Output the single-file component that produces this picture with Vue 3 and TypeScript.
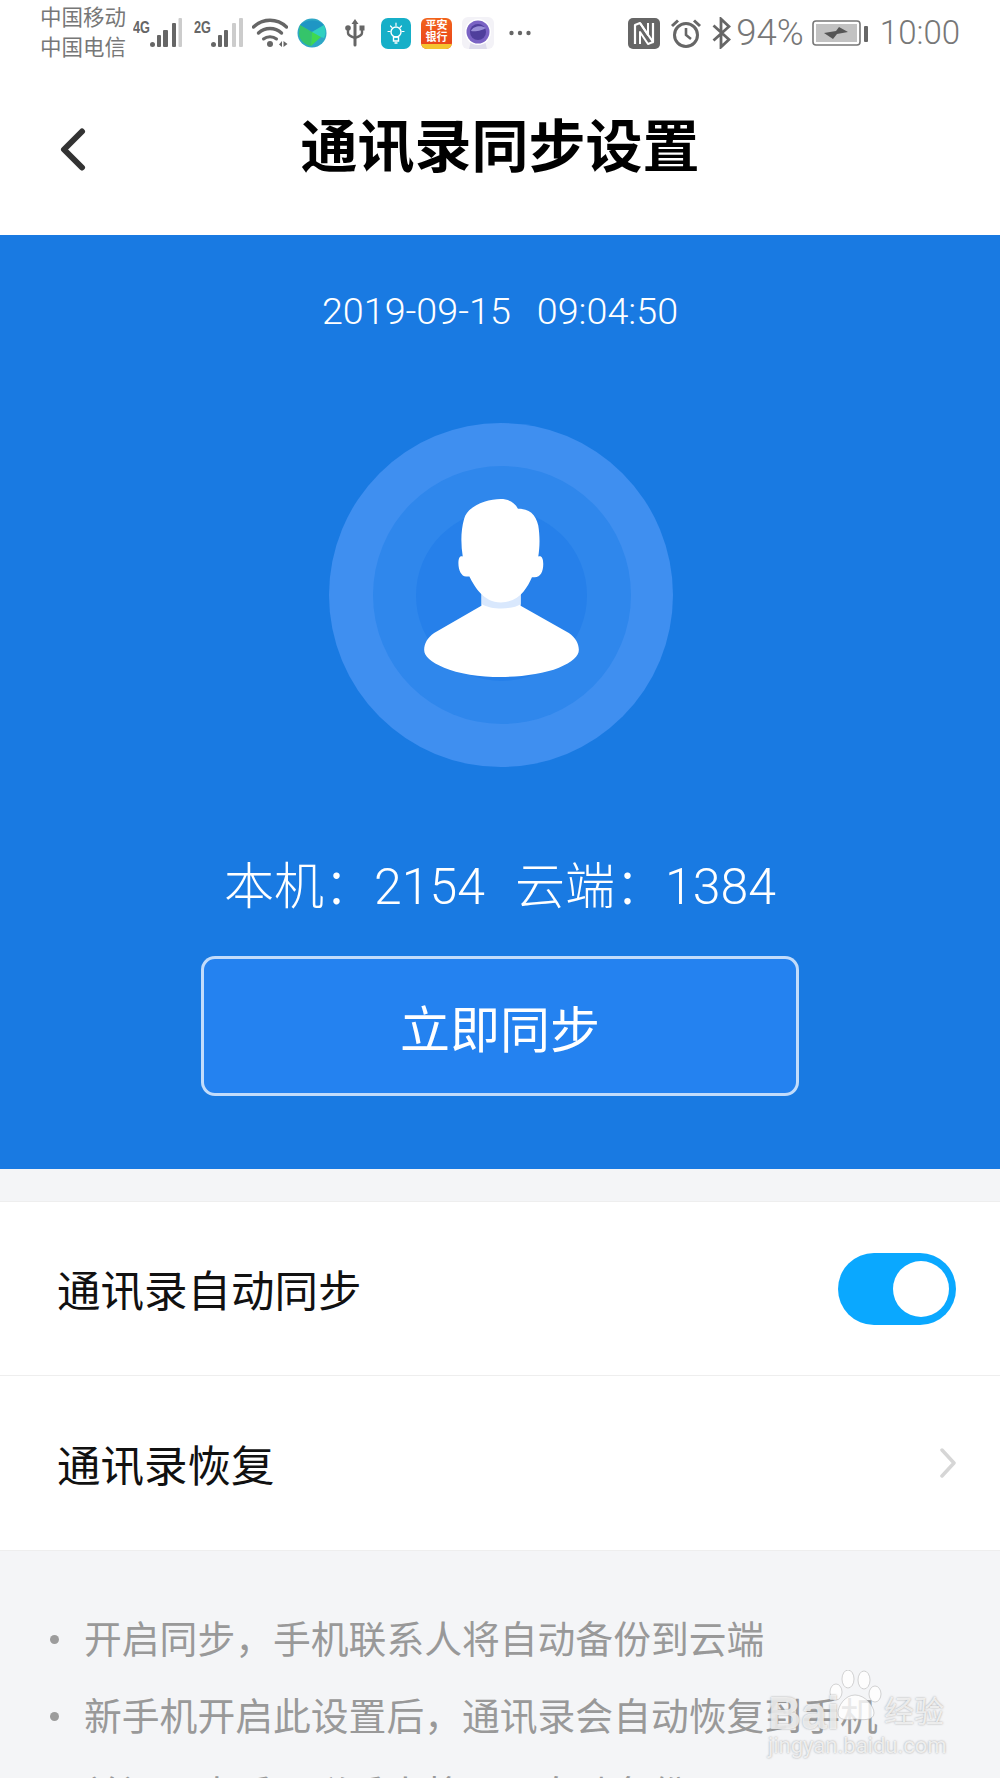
<script setup lang="ts">
const notes: string[] = [
  '开启同步，手机联系人将自动备份到云端',
  '新手机开启此设置后，通讯录会自动恢复到手机',
  '关闭同步后，联系人将不再自动备份',
]
</script>

<template>
  <div class="page">
    <div class="status">
      <div class="carrier"><span>中国移动</span><span>中国电信</span></div>
      <svg class="sig" width="49" height="30" viewBox="0 0 49 30">
        <text x="0" y="15" textLength="17" lengthAdjust="spacingAndGlyphs" class="net">4G</text>
        <rect x="17" y="24" width="5" height="5" rx="2.5" fill="#666"/>
        <rect x="24" y="17" width="4" height="12" rx="1" fill="#666"/>
        <rect x="30" y="12" width="5" height="17" rx="1" fill="#666"/>
        <rect x="39" y="5" width="4" height="24" rx="1" fill="#666"/>
        <rect x="45.500" y="0" width="3.500" height="29" rx="1" fill="#ccc"/>
      </svg>
      <svg class="sig sig2" width="49" height="30" viewBox="0 0 49 30">
        <text x="0" y="15" textLength="17" lengthAdjust="spacingAndGlyphs" class="net">2G</text>
        <rect x="17" y="24" width="5" height="5" rx="2.500" fill="#666"/>
        <rect x="24" y="17" width="4" height="12" rx="1" fill="#666"/>
        <rect x="30" y="12" width="4" height="17" rx="1" fill="#666"/>
        <rect x="38" y="5" width="4" height="24" rx="1" fill="#ccc"/>
        <rect x="45" y="0" width="4" height="29" rx="1" fill="#ccc"/>
      </svg>
      <svg class="wifi" width="36" height="30" viewBox="0 0 36 30">
        <path d="M1.500 9 C11 0 25 0 34.500 9" fill="none" stroke="#666" stroke-width="3.400" stroke-linecap="round"/>
        <path d="M6.500 15 C13 9 23 9 29.500 15" fill="none" stroke="#666" stroke-width="3.400" stroke-linecap="round"/>
        <path d="M11.500 21 C15 18 21 18 24.500 21" fill="none" stroke="#666" stroke-width="3" stroke-linecap="round"/>
        <circle cx="18" cy="26" r="3" fill="#666"/>
        <path d="M27 26.500 L30 23 V29 Z M31.500 23 V29 L35.500 26 Z" fill="#666"/>
      </svg>
      <svg class="gem" width="30" height="30" viewBox="0 0 30 30">
        <circle cx="15" cy="15" r="14.500" fill="#2ea7c6"/>
        <path d="M3 7 C8 2 20 0 27 7 L15 14 Z" fill="#1f96c4"/>
        <path d="M3 7 L15 14 L14 28 C8 27 3 23 2 16 Z" fill="#35c46a"/>
        <path d="M15 14 L27 7 C29 12 29 16 27 20 L17 17 Z" fill="#2fd0c0"/>
        <path d="M15 14 L24 19 L14 28 Z" fill="#3fd94f"/>
      </svg>
      <svg class="usb" width="20" height="30" viewBox="0 0 20 30">
        <path d="M10 1 L13.500 6 H11.500 V27 A1.500 1.500 0 0 1 8.500 27 V6 H6.500 Z" fill="#666"/>
        <path d="M3 11 V15 C3 17 5 18 10 20 C15 18 17 17 17 15 V11" fill="none" stroke="#666" stroke-width="2.400"/>
        <circle cx="3" cy="10" r="2.800" fill="#666"/>
        <rect x="14.500" y="7.500" width="5" height="5" fill="#666"/>
      </svg>
      <svg class="bulb" width="30" height="31" viewBox="0 0 30 31">
        <rect width="30" height="31" rx="7" fill="#16afc8"/>
        <circle cx="15" cy="14" r="5" fill="none" stroke="#fff" stroke-width="1.400"/>
        <path d="M12.500 19 H17.500 V23 H12.500 Z M13.500 25 H16.500" fill="none" stroke="#fff" stroke-width="1.400"/>
        <path d="M15 5 V7.500 M7 13.500 H9 M21 13.500 H23 M9.500 8 L11 9.500 M20.500 8 L19 9.500" stroke="#fff" stroke-width="1.200" stroke-linecap="round"/>
      </svg>
      <div class="pingan"><span>平安</span><span>银行</span><i></i></div>
      <svg class="cam" width="32" height="32" viewBox="0 0 32 32">
        <rect width="32" height="32" rx="6" fill="#f3f2f7"/>
        <path d="M7 32 L9 24 H23 L25 32 Z" fill="#dedcec"/>
        <circle cx="16" cy="15" r="13" fill="#ffffff"/>
        <circle cx="16" cy="15" r="11.500" fill="#7a63c4"/>
        <circle cx="16" cy="15" r="8" fill="#4f3f9c"/>
        <path d="M9 14 C11 9 19 8 24 11 C21 13 14 15 9 14 Z" fill="#9a90d8"/>
      </svg>
      <svg class="dots" width="22" height="6" viewBox="0 0 22 6">
        <circle cx="2.500" cy="3" r="2.200" fill="#666"/><circle cx="11" cy="3" r="2.200" fill="#666"/><circle cx="19.500" cy="3" r="2.200" fill="#666"/>
      </svg>

      <svg class="nfc" width="32" height="31" viewBox="0 0 32 31">
        <rect width="32" height="31" rx="5" fill="#666"/>
        <path d="M7 26 V7 L12 5 L25 24 V5" fill="none" stroke="#fff" stroke-width="2.200" stroke-linejoin="round"/>
        <path d="M12 26 V14 L20 26 L25 24 M20 5 V17 L12 5" fill="none" stroke="#fff" stroke-width="2" stroke-linejoin="round"/>
      </svg>
      <svg class="alarm" width="32" height="30" viewBox="0 0 32 30">
        <circle cx="16" cy="17" r="11.500" fill="none" stroke="#666" stroke-width="3"/>
        <path d="M16 10 V17 L21 21" fill="none" stroke="#666" stroke-width="2.600"/>
        <path d="M2 8 L8 2.500 M30 8 L24 2.500" stroke="#666" stroke-width="3"/>
      </svg>
      <svg class="bt" width="19" height="32" viewBox="0 0 19 32">
        <path d="M1.500 8.500 L17 22.500 L9 30 V2 L17 9.500 L1.500 23.500" fill="none" stroke="#666" stroke-width="2.800"/>
      </svg>
      <span class="pct">94%</span>
      <svg class="batt" width="56" height="26" viewBox="0 0 56 26">
        <rect x="1" y="1" width="47" height="24" rx="3" fill="none" stroke="#777" stroke-width="1.600"/>
        <rect x="4" y="4" width="41" height="18" fill="#c2c2c2"/>
        <path d="M12 13 L24 11 L27 7 L36 12 L25 14 L21 19 Z" fill="#555"/>
        <rect x="52" y="6" width="4" height="16" rx="1" fill="#666"/>
      </svg>
      <span class="clock">10:00</span>
    </div>

    <header class="head">
      <svg class="back" width="26" height="43" viewBox="0 0 26 43">
        <path d="M22 3.500 L4 21.500 L22 39.500" fill="none" stroke="#333" stroke-width="6" stroke-linecap="round" stroke-linejoin="round"/>
      </svg>
      <h1>通讯录同步设置</h1>
    </header>

    <section class="hero">
      <div class="date"><span>2019-09-15</span><span>09:04:50</span></div>
      <div class="ring outer">
        <div class="ring middle">
          <div class="ring inner">
            <svg class="person" width="155" height="178" viewBox="340 265 465 535">
              <path d="M512 540 H630 V586 L775 668 C795 682 805 700 805 718 C805 738 785 755 745 772 C700 790 630 800 570 800 C510 800 440 790 400 772 C360 755 340 738 340 718 C340 700 350 682 370 668 L512 586 Z" fill="#fff"/>
              <path d="M514 550 C530 575 610 575 630 550 V581 C605 598 540 598 514 581 Z" fill="#d9e8fd"/>
              <path d="M570 265 C592 265 612 274 622 294 C655 294 676 310 683 345 C688 375 688 410 683 438 C692 434 698 442 698 460 C698 482 690 500 672 500 L664 500 C650 532 625 576 570 576 C520 576 492 530 476 498 L466 498 C452 498 443 478 443 458 C443 442 448 434 456 438 C450 400 450 360 460 325 C470 285 530 265 570 265 Z" fill="#fff"/>
            </svg>
          </div>
        </div>
      </div>
      <div class="stats"><span>本机：2154</span><span>云端：1384</span></div>
      <button class="sync" type="button">立即同步</button>
    </section>

    <div class="list">
      <div class="row">
        <span>通讯录自动同步</span>
        <div class="toggle"><i></i></div>
      </div>
      <div class="row">
        <span>通讯录恢复</span>
        <svg class="chev" width="16" height="30" viewBox="0 0 16 30">
          <path d="M2 2 L14 15 L2 28" fill="none" stroke="#d6d6d6" stroke-width="3.500" stroke-linecap="round" stroke-linejoin="round"/>
        </svg>
      </div>
    </div>

    <ul class="notes">
      <li v-for="n in notes" :key="n">{{ n }}</li>
    </ul>

    <div class="mark">
      <svg class="paw" width="54" height="52" viewBox="0 0 54 52">
        <ellipse cx="8" cy="22" rx="6" ry="8" />
        <ellipse cx="20" cy="9" rx="6" ry="9" />
        <ellipse cx="36" cy="10" rx="6" ry="9" />
        <ellipse cx="47" cy="24" rx="6" ry="8" />
        <path d="M27 25 C17 25 10 36 10 43 C10 51 20 50 27 49 C34 50 46 51 46 43 C46 36 37 25 27 25 Z" />
      </svg>
      <span class="bai">Bai</span>
      <span class="jy">经验</span>
      <span class="url">jingyan.baidu.com</span>
    </div>
  </div>
</template>

<style scoped>
.page {
  position: relative;
  width: 1000px;
  height: 1778px;
  overflow: hidden;
  background: #f4f5f7;
  font-family: Roboto, "Noto Sans CJK SC", sans-serif;
}
.status {
  display: flex;
  align-items: center;
  height: 66px;
  padding: 0 40px 0 40px;
  background: #fff;
  color: #777;
}
.carrier {
  display: flex;
  flex-direction: column;
  width: 93px;
  font-size: 21.500px;
  line-height: 30px;
  white-space: nowrap;
}
.net {
  font-family: "Liberation Sans", sans-serif;
  font-size: 17px;
  font-weight: 700;
  fill: #666;
}
.sig2 { margin-left: 12px; }
.wifi { margin-left: 9px; }
.gem { margin-left: 9px; }
.usb { margin-left: 18px; }
.bulb { margin-left: 16px; }
.pingan {
  position: relative;
  display: flex;
  flex-direction: column;
  align-items: center;
  width: 31px;
  height: 31px;
  margin-left: 10px;
  border-radius: 6px;
  background: linear-gradient(#f2641c, #e8401a);
  color: #fff;
  font-size: 11px;
  font-weight: 700;
  line-height: 12px;
  overflow: hidden;
}
.pingan span:first-child { margin-top: 2px; }
.pingan i {
  position: absolute;
  left: 0;
  right: 0;
  bottom: 0;
  height: 5px;
  background: #f4c430;
}
.cam { margin-left: 10px; }
.dots { margin-left: 15px; }
.nfc { margin-left: auto; }
.alarm { margin-left: 10px; }
.bt { margin-left: 10px; }
.pct {
  margin-left: 5px;
  font-size: 36.500px;
  font-weight: 300;
  line-height: 40px;
}
.batt { margin-left: 8px; }
.clock {
  margin-left: 12px;
  font-size: 33px;
  font-weight: 300;
  line-height: 40px;
}
.head {
  position: relative;
  display: flex;
  align-items: center;
  justify-content: center;
  height: 169px;
  background: #fff;
}
.head h1 {
  margin: 0 0 6px;
  font-size: 57px;
  font-weight: 700;
  line-height: 70px;
  color: #000;
}
.back {
  position: absolute;
  left: 60px;
  top: 62px;
}
.hero {
  display: flex;
  flex-direction: column;
  align-items: center;
  height: 934px;
  padding-top: 50px;
  box-sizing: border-box;
  background: #197ae2;
  color: #fff;
}
.date {
  display: flex;
  gap: 26px;
  height: 52px;
  font-size: 37.700px;
  font-weight: 300;
  line-height: 52px;
}
.ring {
  display: flex;
  align-items: center;
  justify-content: center;
  border-radius: 50%;
}
.outer {
  width: 344px;
  height: 344px;
  margin-top: 86px;
  margin-left: 2px;
  background: #3f8ff0;
}
.middle {
  width: 258px;
  height: 258px;
  margin-left: 2px;
  background: #2f87ec;
}
.inner {
  width: 171px;
  height: 171px;
  margin-right: 2px;
  background: #2680ea;
}
.person {
  flex: none;
  margin-bottom: 14px;
}
.stats {
  display: flex;
  gap: 30px;
  height: 64px;
  margin-top: 88px;
  font-size: 50px;
  font-weight: 300;
  line-height: 64px;
}
.sync {
  width: 598px;
  height: 140px;
  margin-top: 37px;
  border: 3px solid rgba(255, 255, 255, 0.72);
  border-radius: 14px;
  background: #2482f0;
  color: #fff;
  font-family: inherit;
  font-size: 50px;
  font-weight: 400;
  padding: 0;
}
.list {
  margin-top: 32px;
  border-top: 1px solid #eeeeee;
  border-bottom: 1px solid #eeeeee;
  background: #fff;
}
.row {
  display: flex;
  align-items: center;
  justify-content: space-between;
  height: 173px;
  padding: 0 44px 0 57px;
  font-size: 43.500px;
  color: #111;
}
.row + .row {
  height: 174px;
  border-top: 1px solid #eeeeee;
}
.toggle {
  display: flex;
  align-items: center;
  justify-content: flex-end;
  width: 118px;
  height: 72px;
  padding-right: 7px;
  box-sizing: border-box;
  border-radius: 36px;
  background: #0aa8ff;
}
.toggle i {
  width: 56px;
  height: 56px;
  border-radius: 50%;
  background: #fff;
}
.notes {
  margin: 0;
  padding: 51px 0 0 84px;
  list-style: none;
  font-size: 37.800px;
  line-height: 77px;
  color: #999;
}
.notes li {
  position: relative;
  white-space: nowrap;
}
.notes li:last-child {
  margin-top: 1px;
}
.notes li::before {
  content: "";
  position: absolute;
  left: -34px;
  top: 33px;
  width: 9px;
  height: 9px;
  border-radius: 50%;
  background: #9c9c9c;
}
.mark {
  position: absolute;
  left: 768px;
  top: 1668px;
  width: 180px;
  height: 92px;
  color: rgba(255, 255, 255, 0.75);
  text-shadow: 0 0 2px rgba(130, 130, 130, 0.75);
}
.paw {
  position: absolute;
  left: 60px;
  top: 2px;
  fill: rgba(255, 255, 255, 0.78);
  stroke: rgba(170, 170, 170, 0.5);
  stroke-width: 1;
}
.bai {
  position: absolute;
  left: 0;
  top: 18px;
  font-family: "Liberation Sans", sans-serif;
  font-size: 46px;
  line-height: 54px;
  font-weight: 700;
}
.jy {
  position: absolute;
  left: 116px;
  top: 24px;
  font-size: 30px;
  line-height: 40px;
  white-space: nowrap;
}
.url {
  position: absolute;
  left: 0;
  top: 64px;
  font-size: 22px;
  line-height: 28px;
  white-space: nowrap;
}
</style>
